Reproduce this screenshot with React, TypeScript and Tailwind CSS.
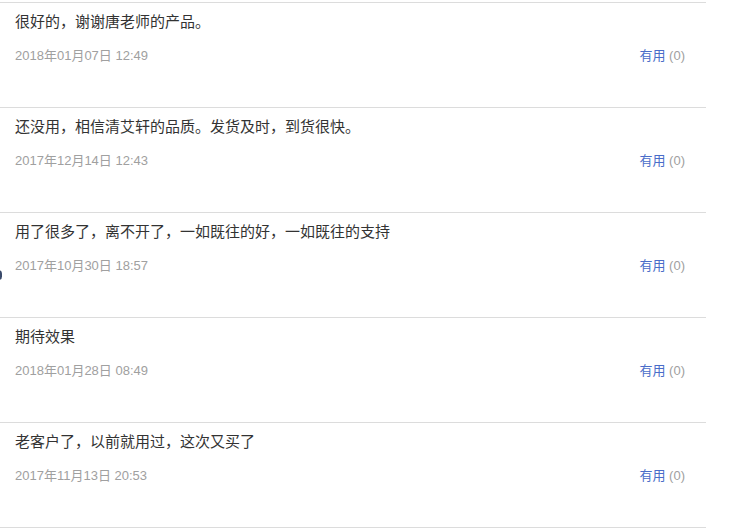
import React from "react";

const items = [
  { text: "很好的，谢谢唐老师的产品。", date: "2018年01月07日 12:49" },
  { text: "还没用，相信清艾轩的品质。发货及时，到货很快。", date: "2017年12月14日 12:43" },
  { text: "用了很多了，离不开了，一如既往的好，一如既往的支持", date: "2017年10月30日 18:57" },
  { text: "期待效果", date: "2018年01月28日 08:49" },
  { text: "老客户了，以前就用过，这次又买了", date: "2017年11月13日 20:53" },
];

export default function App() {
  return (
    <div className="relative w-[730px] h-[528px] bg-white overflow-hidden" style={{ fontFamily: '"Liberation Sans", "Noto Sans CJK SC", sans-serif' }}>
      <div className="w-[706px] pt-[2px]">
        {items.map((it, i) => (
          <div key={i} className="border-t border-[#dcdcdc] pt-[9px] pb-[41px] pl-[15px] pr-[21px]">
            <div className="text-[15px] leading-[20px] text-[#333]">{it.text}</div>
            <div className="mt-[14px] flex justify-between text-[13px] leading-[20px]">
              <span className="text-[#a0a0a0]">{it.date}</span>
              <span>
                <span className="text-[#4a6dc9]">有用</span>
                <span className="text-[#a0a0a0]"> (0)</span>
              </span>
            </div>
          </div>
        ))}
        <div className="border-t border-[#dcdcdc]" />
      </div>
      <div className="absolute left-[-5px] top-[270px] w-[7px] h-[10px] rounded-full bg-[#3a4a6a]" />
    </div>
  );
}
